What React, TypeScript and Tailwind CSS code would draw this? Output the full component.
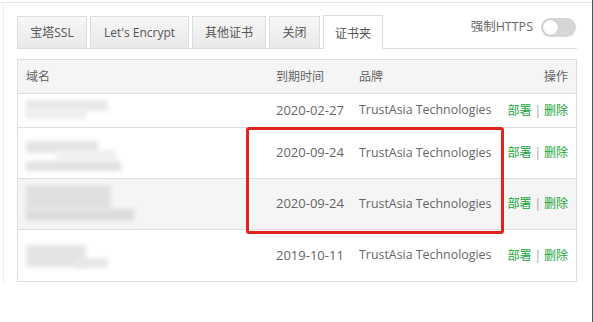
import React from "react";

const font = { fontFamily: '"Open Sans", "Noto Sans CJK SC", sans-serif' };

function Blur({ blocks }: { blocks: { x: number; y: number; w: number; h: number; c: string }[] }) {
  return (
    <div className="relative h-full w-[180px]">
      {blocks.map((b, i) => (
        <div
          key={i}
          className="absolute blur-[2px]"
          style={{ left: b.x, top: b.y, width: b.w, height: b.h, background: b.c }}
        />
      ))}
    </div>
  );
}

type Row = { date: string; h: string; bg: string; blocks: { x: number; y: number; w: number; h: number; c: string }[] };

const rows: Row[] = [
  {
    date: "2020-02-27",
    h: "h-[34px]",
    bg: "bg-white",
    blocks: [
      { x: 0, y: 6, w: 82, h: 11, c: "#e8e8e8" },
      { x: 0, y: 15, w: 60, h: 10, c: "#eeeeee" },
    ],
  },
  {
    date: "2020-09-24",
    h: "h-[51px]",
    bg: "bg-white",
    blocks: [
      { x: 0, y: 13, w: 72, h: 12, c: "#e4e4e4" },
      { x: 30, y: 22, w: 60, h: 10, c: "#f0f0f0" },
      { x: 0, y: 33, w: 95, h: 10, c: "#e2e2e2" },
    ],
  },
  {
    date: "2020-09-24",
    h: "h-[51px]",
    bg: "bg-[#f5f5f5]",
    blocks: [
      { x: 0, y: 6, w: 85, h: 24, c: "#e0e0e0" },
      { x: 0, y: 30, w: 108, h: 12, c: "#dcdcdc" },
    ],
  },
  {
    date: "2019-10-11",
    h: "h-[51px]",
    bg: "bg-white",
    blocks: [
      { x: 0, y: 15, w: 60, h: 22, c: "#e4e4e4" },
      { x: 50, y: 28, w: 32, h: 10, c: "#e8e8e8" },
    ],
  },
];

export default function App() {
  return (
    <div className="relative w-[593px] h-[322px] bg-white text-[12px] text-[#666]" style={font}>
      <div className="absolute left-0 right-0 top-[2px] h-px bg-[#e4e4e4]" />
      <div className="absolute left-[3px] top-[2px] h-[282px] w-px bg-[#ececec]" />
      <div className="absolute right-0 top-0 h-full w-px bg-[#555]" />

      <div className="pl-[17px] pr-[16px] pt-[15px]">
        {/* tabs */}
        <div className="flex items-end border-b border-[#ddd] h-[34px]">
          {["宝塔SSL", "Let's Encrypt", "其他证书", "关闭"].map((t, i) => (
            <div
              key={t}
              className={`h-[32px] flex items-center justify-center border border-b-0 border-[#ddd] bg-gradient-to-b from-[#f7f7f7] to-[#e9e9e9] text-[#555] ${
                i === 0 ? "w-[70px]" : i === 1 ? "w-[99px] ml-[3px]" : i === 2 ? "w-[74px] ml-[3px]" : "w-[51px] ml-[3px]"
              }`}
            >
              {t}
            </div>
          ))}
          <div className="h-[34px] w-[60px] ml-[3px] -mb-px flex items-center justify-center border border-b-0 border-[#ddd] bg-white text-[#555] pt-[3px]">
            证书夹
          </div>
          <div className="ml-auto flex items-center self-start pt-[3px] pr-px">
            <span className="text-[#666] text-[12.5px]">强制HTTPS</span>
            <div className="ml-[8px] w-[35px] h-[19px] rounded-full bg-[#d6d6d6] flex items-center pl-[2px]">
              <div className="w-[15px] h-[15px] rounded-full bg-white shadow-[0_0_1px_rgba(0,0,0,0.3)]" />
            </div>
          </div>
        </div>

        {/* table */}
        <div className="relative mt-[10px] border border-[#ddd]">
          <div className="flex items-center h-[34px] bg-[#f5f5f5] border-b border-[#ddd]">
            <div className="pl-[8px] w-[258px]">域名</div>
            <div className="w-[83px]">到期时间</div>
            <div className="flex-1">品牌</div>
            <div className="pr-[8px]">操作</div>
          </div>
          {rows.map((r, i) => (
            <div
              key={i}
              className={`flex items-center ${r.h} ${r.bg} ${i < rows.length - 1 ? "border-b border-[#ddd]" : ""}`}
            >
              <div className="pl-[8px] w-[258px] h-full">
                <Blur blocks={r.blocks} />
              </div>
              <div className="w-[83px] text-[13px]">{r.date}</div>
              <div className="flex-1 text-[12.4px]">TrustAsia Technologies</div>
              <div className="pr-[8px] text-[12px] text-[#20a53a] flex items-center">
                <span>部署</span>
                <span className="text-[#999] mx-[3px]">|</span>
                <span>删除</span>
              </div>
            </div>
          ))}

          <div className="absolute left-[228px] top-[67px] w-[258px] h-[107px] border-[3px] border-[#e3231f] rounded-[3px]" />
        </div>
      </div>
    </div>
  );
}
